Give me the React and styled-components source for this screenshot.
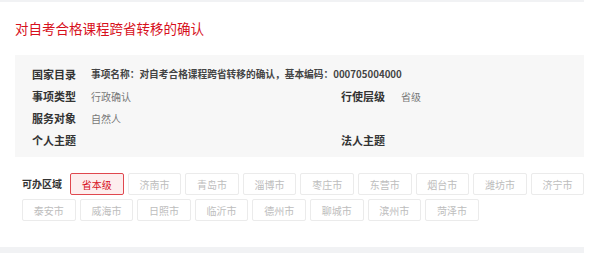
import React from 'react';
import styled, { createGlobalStyle } from 'styled-components';

const GlobalStyle = createGlobalStyle`
	body {
		margin: 0;
		background: #fff;
		font-family: "Noto Sans CJK SC", "Noto Sans", sans-serif;
	}
`;

const Page = styled.div`
	width: 584px;
	background: #f1f2f4;
	padding: 2px 0 6px;
`;

const Card = styled.div`
	background: #fff;
	padding: 18px 0 22px;
`;

const Title = styled.h1`
	margin: 0 0 19px 15px;
	font-size: 13.5px;
	line-height: 16px;
	font-weight: normal;
	color: #d7101c;
`;

const InfoPanel = styled.div`
	margin-left: 15px;
	background: #f7f7f7;
	padding: 8px 0 6px 17px;
`;

const Row = styled.div`
	display: grid;
	grid-template-columns: 309px 1fr;
	height: 22px;
	align-items: center;
`;

const Field = styled.div`
	display: flex;
	align-items: center;
	white-space: nowrap;
`;

const Label = styled.span`
	width: ${(p) => p.w || 59}px;
	flex-shrink: 0;
	font-size: 11px;
	font-weight: bold;
	color: #333;
`;

const Value = styled.span`
	font-size: ${(p) => (p.strong ? 9.7 : 10)}px;
	color: ${(p) => (p.strong ? '#444' : '#777')};
	font-weight: ${(p) => (p.strong ? 600 : 'normal')};
`;

const Region = styled.div`
	display: flex;
	flex-wrap: wrap;
	align-items: center;
	column-gap: 4px;
	width: 565px;
	margin: 16px 0 0 22px;
`;

const RegionLabel = styled.span`
	width: 40px;
	margin-right: 4px;
	height: 22px;
	line-height: 22px;
	font-size: 10px;
	font-weight: bold;
	color: #333;
	margin-bottom: 4px;
`;

const Chip = styled.div`
	box-sizing: border-box;
	width: 53.6px;
	height: 22px;
	margin-bottom: 4px;
	display: flex;
	align-items: center;
	justify-content: center;
	font-size: 10px;
	border-radius: 2px;
	border: 1px solid ${(p) => (p.active ? '#e0474e' : '#ebebeb')};
	background: ${(p) => (p.active ? '#fdeeee' : '#fff')};
	color: ${(p) => (p.active ? '#d7101c' : '#bdbdbd')};
`;

const cities = [
	'省本级', '济南市', '青岛市', '淄博市', '枣庄市', '东营市', '烟台市', '潍坊市', '济宁市',
	'泰安市', '威海市', '日照市', '临沂市', '德州市', '聊城市', '滨州市', '菏泽市',
];

const App = () => {
	return (
		<>
			<GlobalStyle />
			<Page>
				<Card>
					<Title>对自考合格课程跨省转移的确认</Title>
					<InfoPanel>
						<Row>
							<Field>
								<Label>国家目录</Label>
								<Value strong>事项名称：对自考合格课程跨省转移的确认，基本编码：000705004000</Value>
							</Field>
						</Row>
						<Row>
							<Field>
								<Label>事项类型</Label>
								<Value>行政确认</Value>
							</Field>
							<Field>
								<Label w={60}>行使层级</Label>
								<Value>省级</Value>
							</Field>
						</Row>
						<Row>
							<Field>
								<Label>服务对象</Label>
								<Value>自然人</Value>
							</Field>
						</Row>
						<Row>
							<Field>
								<Label>个人主题</Label>
							</Field>
							<Field>
								<Label w={60}>法人主题</Label>
							</Field>
						</Row>
					</InfoPanel>
					<Region>
						<RegionLabel>可办区域</RegionLabel>
						{cities.map((c, i) => (
							<Chip key={c} active={i === 0}>{c}</Chip>
						))}
					</Region>
				</Card>
			</Page>
		</>
	);
};

export default App;
